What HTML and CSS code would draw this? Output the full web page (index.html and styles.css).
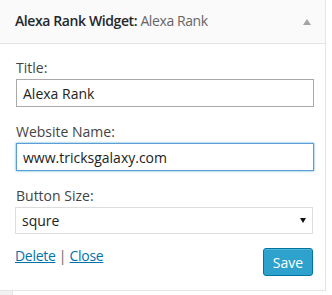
FILE: index.html
```html
<!DOCTYPE html>
<html lang="en">
<head>
  <meta charset="UTF-8" />
  <title>Alexa Rank Widget</title>
  <meta name="viewport" content="width=device-width, initial-scale=1.0"/>
  <link rel="stylesheet" href="styles.css">
</head>
<body>
  <div class="widget">
    <div class="widget-top">
      <h3 class="widget-title">Alexa Rank Widget: <span class="in-title">Alexa Rank</span></h3>
      <span class="toggle"></span>
    </div>

    <form class="widget-inside">
      <label for="title">Title:</label>
      <input type="text" id="title" value="Alexa Rank" />

      <label for="site">Website Name:</label>
      <input type="text" id="site" class="focused" value="www.tricksgalaxy.com" />

      <label for="size">Button Size:</label>
      <div class="select-wrap">
        <select id="size">
          <option>squre</option>
          <option>small</option>
          <option>large</option>
        </select>
      </div>

      <div class="actions">
        <div class="links">
          <a href="#">Delete</a> <span class="sep">|</span> <a href="#">Close</a>
        </div>
        <button type="submit" class="save">Save</button>
      </div>
    </form>
  </div>

  <div class="below">
    <div class="gutter"></div>
    <div class="next"></div>
  </div>
</body>
</html>
```

FILE: styles.css
```css
body {
  margin: 0;
  background: #fff;
  font-family: "Open Sans", "Noto Sans", sans-serif;
  font-size: 14px;
  color: #444;
}

.widget {
  width: 325px;
  border-right: 1px solid #e5e5e5;
  border-bottom: 1px solid #e5e5e5;
  background: #fff;
}

.widget-top {
  display: flex;
  justify-content: space-between;
  box-sizing: border-box;
  height: 44px;
  padding: 11px 14px 0 15px;
  background: #fafafa;
  border-bottom: 1px solid #e5e5e5;
}

.widget-title {
  margin: 0;
  font-size: 14px;
  line-height: 19px;
  font-weight: 600;
  letter-spacing: -0.4px;
  color: #23282d;
}

.in-title {
  font-weight: 400;
  color: #666;
}

.toggle {
  width: 0;
  height: 0;
  margin-top: 8px;
  border-left: 4px solid transparent;
  border-right: 4px solid transparent;
  border-bottom: 6px solid #a0a5aa;
}

.widget-inside {
  display: flex;
  flex-direction: column;
  padding: 14px 11px 14px 16px;
}

label {
  line-height: 20px;
  color: #444;
  margin-bottom: 1px;
}

input[type="text"] {
  box-sizing: border-box;
  height: 28px;
  margin: 0 0 15px;
  padding: 0 6px;
  border: 1px solid #aaa;
  font: inherit;
  font-size: 14px;
  color: #222;
  outline: none;
}

input.focused {
  border-color: #5b9dd9;
  box-shadow: 0 0 2px rgba(30, 140, 190, 0.8);
}

.select-wrap {
  position: relative;
}

.select-wrap::after {
  content: "";
  position: absolute;
  right: 8px;
  top: 11px;
  border-left: 3.5px solid transparent;
  border-right: 3.5px solid transparent;
  border-top: 5px solid #111;
  pointer-events: none;
}

select {
  box-sizing: border-box;
  width: 100%;
  height: 27px;
  margin-left: -1px;
  padding: 0 6px;
  border: 1px solid #ddd;
  border-radius: 0;
  background: #fff;
  font: inherit;
  font-size: 14px;
  color: #222;
  -webkit-appearance: none;
  appearance: none;
}

.actions {
  display: flex;
  justify-content: space-between;
  align-items: flex-start;
  margin-top: 12px;
}

.links {
  line-height: 20px;
  margin-left: -1px;
  letter-spacing: -0.3px;
}

.links a {
  color: #0073aa;
  text-decoration: underline;
}

.sep {
  color: #666;
}

.save {
  margin-top: 2px;
  margin-right: 1px;
  width: 50px;
  height: 28px;
  padding: 0;
  border: 1px solid #0074a2;
  border-radius: 3px;
  background: #2ea2cc;
  box-shadow: inset 0 1px 0 rgba(120, 200, 230, 0.5);
  font: inherit;
  font-size: 14px;
  color: #fff;
  cursor: pointer;
}

.below {
  display: flex;
  height: 10px;
}

.gutter {
  width: 12px;
  background: #f1f1f1;
}

.next {
  flex: 1;
  border-left: 1px solid #e5e5e5;
}
```
